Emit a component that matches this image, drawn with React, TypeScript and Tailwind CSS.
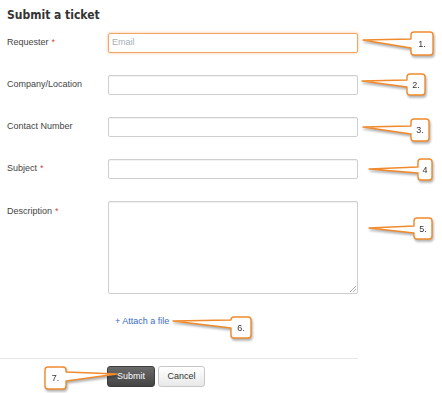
import React from 'react';

type Callout = {
  label: string;
  x: number;
  y: number;
  w: number;
  h: number;
  tip: [number, number];
  a: number;
  b: number;
  side: 'left' | 'right';
};

const callouts: Callout[] = [
  { label: '1.', x: 411, y: 32, w: 22, h: 23, tip: [363, 40], a: 39, b: 48, side: 'left' },
  { label: '2.', x: 407, y: 74, w: 18, h: 21, tip: [362, 81], a: 80, b: 87, side: 'left' },
  { label: '3.', x: 411, y: 119, w: 18, h: 22, tip: [363, 127], a: 126, b: 134, side: 'left' },
  { label: '4', x: 418, y: 159, w: 14, h: 21, tip: [369, 169], a: 167, b: 173, side: 'left' },
  { label: '5.', x: 414, y: 218, w: 18, h: 21, tip: [369, 228], a: 226, b: 233, side: 'left' },
  { label: '6.', x: 231, y: 317, w: 20, h: 21, tip: [173, 321], a: 320, b: 328, side: 'left' },
  { label: '7.', x: 45, y: 367, w: 21, h: 22, tip: [117, 374], a: 372, b: 381, side: 'right' },
];

function calloutPath(c: Callout) {
  const r = 3;
  const { x, y, w, h, a, b } = c;
  const [tx, ty] = c.tip;
  const R = x + w;
  const B = y + h;
  if (c.side === 'left') {
    return `M${x + r},${y} H${R - r} Q${R},${y} ${R},${y + r} V${B - r} Q${R},${B} ${R - r},${B} H${x + r} Q${x},${B} ${x},${B - r} V${b} L${tx},${ty} L${x},${a} V${y + r} Q${x},${y} ${x + r},${y} Z`;
  }
  return `M${x + r},${y} H${R - r} Q${R},${y} ${R},${y + r} V${a} L${tx},${ty} L${R},${b} V${B - r} Q${R},${B} ${R - r},${B} H${x + r} Q${x},${B} ${x},${B - r} V${y + r} Q${x},${y} ${x + r},${y} Z`;
}

const Req = () => <span className="text-[#d0454c] ml-[3px]">*</span>;

const inputCls =
  'w-[250px] h-[20px] border border-[#cfcfcf] rounded-[2px] bg-white shadow-[inset_0_1px_1px_rgba(0,0,0,0.06)]';

export default function App() {
  return (
    <div className="relative w-[442px] h-[393px] bg-white overflow-hidden font-['Liberation_Sans',Arial,sans-serif] text-[9px] text-[#444]">
      <div className="pl-[7px] pt-[7px]">
        <h1 className="font-['DejaVu_Sans_Condensed','Open_Sans',sans-serif] font-bold text-[12px] leading-[16px] text-[#333]">
          Submit a ticket
        </h1>

        <div className="mt-[10px] flex flex-col gap-[22px]">
          <div className="flex items-center">
            <label className="w-[101px]">
              Requester<Req />
            </label>
            <div className="w-[250px] h-[20px] border border-[#f5a462] rounded-[2px] bg-white shadow-[0_0_3px_rgba(245,150,70,0.6)] flex items-center pl-[3px] text-[#a8b0b8]">
              Email
            </div>
          </div>
          <div className="flex items-center">
            <label className="w-[101px]">Company/Location</label>
            <div className={inputCls} />
          </div>
          <div className="flex items-center">
            <label className="w-[101px]">Contact Number</label>
            <div className={inputCls} />
          </div>
          <div className="flex items-center">
            <label className="w-[101px]">
              Subject<Req />
            </label>
            <div className={inputCls} />
          </div>
          <div className="flex items-start">
            <label className="w-[101px] pt-[4px]">
              Description<Req />
            </label>
            <div className="relative w-[250px] h-[93px] border border-[#cfcfcf] rounded-[2px] bg-white shadow-[inset_0_1px_1px_rgba(0,0,0,0.06)]">
              <svg className="absolute right-[1px] bottom-[1px]" width="6" height="6" viewBox="0 0 6 6">
                <path d="M6 0 L0 6 M6 3 L3 6" stroke="#999" strokeWidth="0.8" />
              </svg>
            </div>
          </div>
        </div>

        <div className="mt-[21px] ml-[108px] text-[#3c6cc4] leading-[12px]">+ Attach a file</div>
      </div>

      <div className="mt-[31px] w-[358px] h-px bg-[#e6e6e6]" />

      <div className="mt-[7px] ml-[107px] flex gap-[3px]">
        <button className="w-[48px] h-[21px] rounded-[3px] bg-gradient-to-b from-[#6a6a6a] to-[#444] text-white text-[9px] border border-[#3d3d3d]">
          Submit
        </button>
        <button className="w-[47px] h-[21px] rounded-[3px] bg-gradient-to-b from-white to-[#e8e8e8] text-[#333] text-[9px] border border-[#c8c8c8]">
          Cancel
        </button>
      </div>

      <svg
        className="absolute left-0 top-0 pointer-events-none drop-shadow-[1px_2px_1px_rgba(0,0,0,0.3)]"
        width="442"
        height="393"
      >
        {callouts.map((c) => (
          <g key={c.label}>
            <path d={calloutPath(c)} fill="white" stroke="#f08a2c" strokeWidth="1.4" strokeLinejoin="round" />
            <text
              x={c.x + c.w / 2}
              y={c.y + c.h / 2 + 3}
              textAnchor="middle"
              fontFamily="Liberation Sans, Arial, sans-serif"
              fontSize="9"
              fill="#333"
            >
              {c.label}
            </text>
          </g>
        ))}
      </svg>
    </div>
  );
}
